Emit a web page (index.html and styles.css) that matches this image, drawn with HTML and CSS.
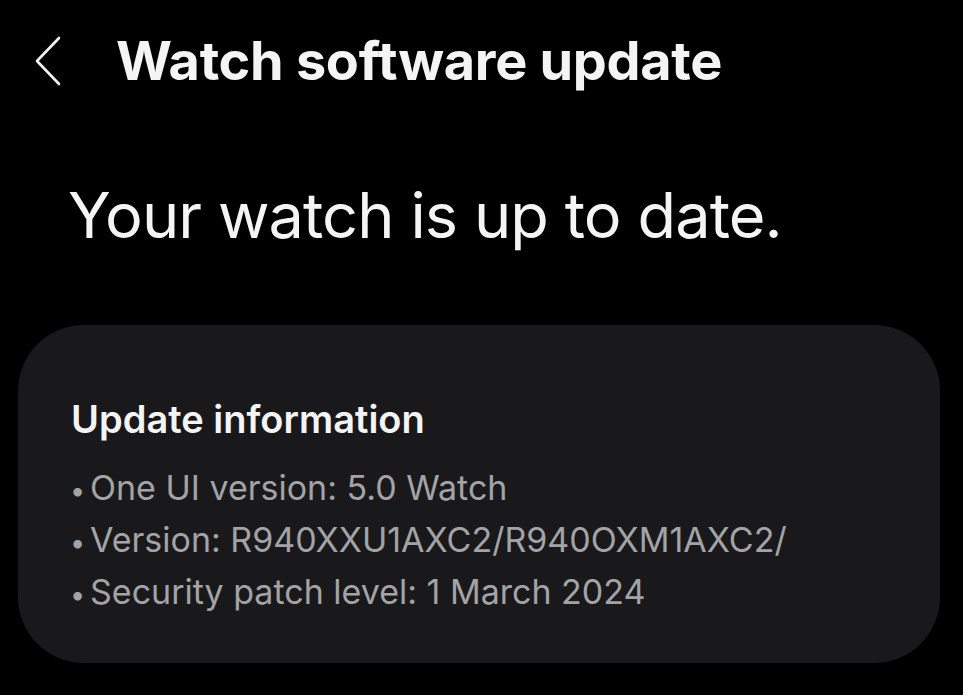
FILE: index.html
```html
<!DOCTYPE html>
<html lang="en">
	<head>
		<meta charset="UTF-8" />
		<meta name="viewport" content="width=device-width, initial-scale=1.0" />
		<title>Watch software update</title>
		<link rel="stylesheet" href="styles.css">
	</head>
	<body>
		<header class="topbar">
			<button class="back" type="button" aria-label="Back">
				<svg width="30" height="52" viewBox="0 0 30 52">
					<path d="M26 3 L4 26 L26 49" fill="none" stroke="#f2f2f2" stroke-width="2.6" stroke-linecap="round" stroke-linejoin="round" />
				</svg>
			</button>
			<h1 class="title">Watch software update</h1>
		</header>

		<p class="status">Your watch is up to date.</p>

		<section class="card">
			<h2 class="card-title">Update information</h2>
			<ul class="info">
				<li>One UI version: 5.0 Watch</li>
				<li>Version: R940XXU1AXC2/R940OXM1AXC2/</li>
				<li>Security patch level: 1 March 2024</li>
			</ul>
		</section>
	</body>
</html>
```

FILE: styles.css
```css
body {
	margin: 0;
	background: #000;
	color: #f4f4f4;
	font-family: Inter, "Noto Sans", sans-serif;
}

.topbar {
	display: flex;
	align-items: center;
	padding: 35px 0 0 33px;
	height: 52px;
}

.back {
	/* plain chevron, no button chrome */
	background: none;
	border: 0;
	padding: 0;
	width: 30px;
	height: 52px;
	margin-right: 53px;
}

.title {
	margin: 0;
	font-size: 54px;
	font-weight: 700;
	letter-spacing: -0.3px;
	line-height: 52px;
}

.status {
	margin: 88px 0 0 68px;
	font-size: 63px;
	font-weight: 400;
	line-height: 80px;
	letter-spacing: -0.9px;
}

.card {
	margin: 70px 23px 0 18px;
	height: 338px;
	box-sizing: border-box;
	padding: 69px 54px 0 52px;
	background: #19191b;
	border-radius: 66px;
}

.card-title {
	margin: 0 0 0 1px;
	font-size: 38px;
	font-weight: 600;
	line-height: 50px;
	color: #f4f4f4;
}

.info {
	list-style: none;
	margin: 19px 0 0 0;
	padding: 0;
	color: #a3a3a6;
	font-size: 34px;
	line-height: 49px;
}

.info li::before {
	content: "\2022";
	display: inline-block;
	width: 20px;
	font-size: 27px;
}
```
